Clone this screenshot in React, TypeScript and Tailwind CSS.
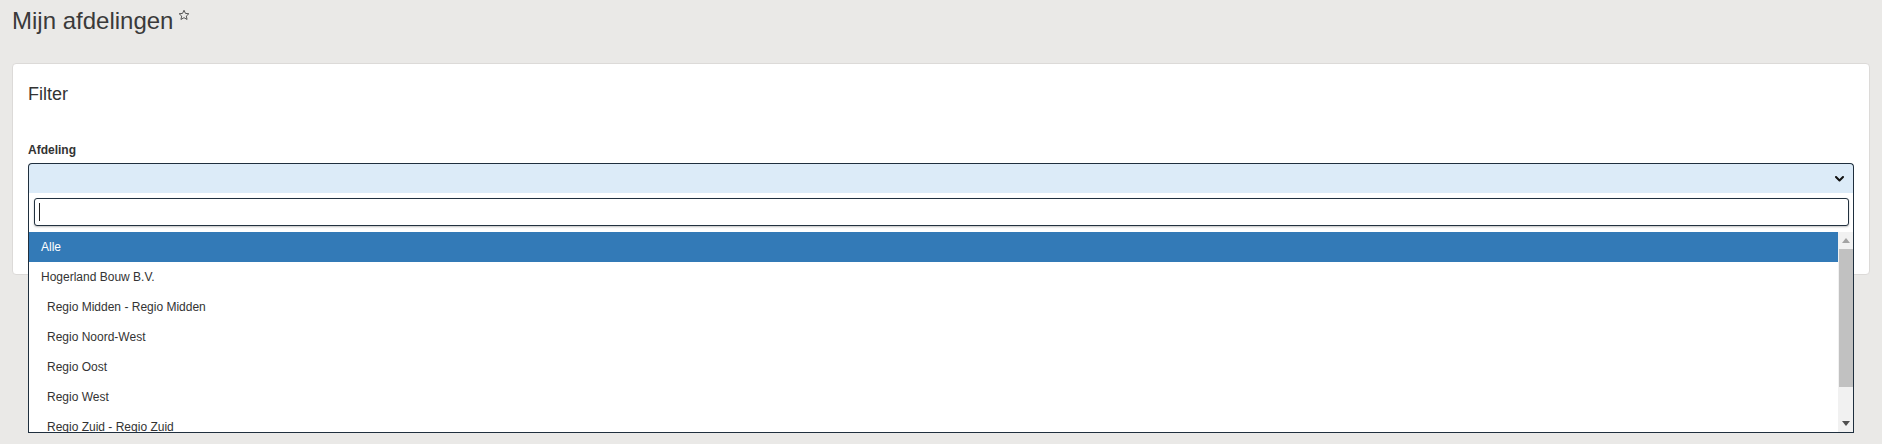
import React from "react";

const items: { label: string; indent: boolean; active?: boolean }[] = [
  { label: "Alle", indent: false, active: true },
  { label: "Hogerland Bouw B.V.", indent: false },
  { label: "Regio Midden - Regio Midden", indent: true },
  { label: "Regio Noord-West", indent: true },
  { label: "Regio Oost", indent: true },
  { label: "Regio West", indent: true },
  { label: "Regio Zuid - Regio Zuid", indent: true },
];

export default function App() {
  return (
    <div
      className="h-[444px] w-full overflow-hidden bg-[#eae9e7] px-[12px] text-[#333]"
      style={{ fontFamily: '"Liberation Sans", Arial, Helvetica, sans-serif' }}
    >
      <div className="flex items-start pt-[8px]">
        <h1 className="text-[24px] leading-[26px] font-normal text-[#3a3a3a]">Mijn afdelingen</h1>
        <svg className="ml-[5px] mt-[1px]" width="12" height="12" viewBox="0 0 24 24" fill="none" stroke="#555" strokeWidth="2" strokeLinejoin="round">
          <path d="M12 2.5l2.9 6.3 6.8.7-5.1 4.6 1.5 6.8L12 17.4 5.9 20.9l1.5-6.8L2.3 9.5l6.8-.7z" />
        </svg>
      </div>

      <div className="mt-[29px] h-[212px] rounded-[4px] border border-[#dcdad8] bg-white px-[15px] pt-[20px]">
        <div className="text-[18px] leading-[20px] text-[#333]">Filter</div>

        <div className="mt-[38px] text-[12px] font-bold leading-[17px] text-[#333]">Afdeling</div>

        <div className="relative mt-[4px]">
          <div className="flex h-[30px] items-center justify-end rounded-t-[4px] border-x border-t border-[#1f2f3e] bg-[#dcebf8] pr-[9px]">
            <svg width="9" height="6" viewBox="0 0 9 6" fill="none" stroke="#111" strokeWidth="2" strokeLinecap="round" strokeLinejoin="round">
              <path d="M1 1l3.5 3.5L8 1" />
            </svg>
          </div>

          <div className="absolute left-0 right-0 top-full z-10 border-x border-b border-[#1f2f3e] bg-white">
            <div className="pb-[6px] pl-[5px] pr-[4px] pt-[5px]">
              <div className="relative h-[28px] rounded-[3px] border border-[#22313f] bg-white shadow-[0_1px_2px_rgba(0,0,0,0.25)]">
                <div className="absolute left-[4px] top-[4px] h-[18px] w-[1px] bg-[#222]" />
              </div>
            </div>

            <div className="flex h-[200px]">
              <div className="flex-1 overflow-hidden">
                {items.map((it) => (
                  <div
                    key={it.label}
                    className={
                      "flex h-[30px] items-center text-[12px] " +
                      (it.active ? "bg-[#337ab7] text-white" : "text-[#333]")
                    }
                  >
                    <span className={it.indent ? "pl-[18px]" : "pl-[12px]"}>{it.label}</span>
                  </div>
                ))}
              </div>
              <div className="flex w-[15px] flex-col bg-[#f1f1f1]">
                <div className="flex h-[17px] items-center justify-center">
                  <svg width="8" height="5" viewBox="0 0 8 5">
                    <path d="M0 5L4 0L8 5Z" fill="#a3a3a3" />
                  </svg>
                </div>
                <div className="ml-[1px] h-[138px] bg-[#c1c1c1]" />
                <div className="flex-1" />
                <div className="flex h-[17px] items-center justify-center">
                  <svg width="8" height="5" viewBox="0 0 8 5">
                    <path d="M0 0L8 0L4 5Z" fill="#505050" />
                  </svg>
                </div>
              </div>
            </div>
          </div>
        </div>
      </div>
    </div>
  );
}
